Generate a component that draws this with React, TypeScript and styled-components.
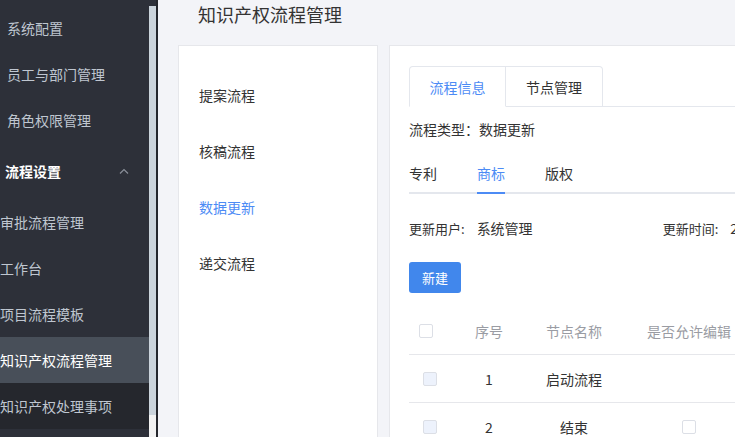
import React from "react";
import styled, { createGlobalStyle } from "styled-components";

const GlobalStyle = createGlobalStyle`
  html, body { margin: 0; padding: 0; overflow: hidden; }
  body {
    font-family: "Noto Sans CJK SC", "Noto Sans", "Liberation Sans", sans-serif;
    font-size: 14px;
    color: #333;
  }
  * { box-sizing: border-box; }
`;

const Layout = styled.div`
  display: flex;
  width: 735px;
  height: 437px;
  overflow: hidden;
`;

const Sidebar = styled.nav`
  width: 149px;
  flex-shrink: 0;
  background: #2d3039;
  display: flex;
  flex-direction: column;
  padding-top: 5px;
  overflow: hidden;
`;

const MenuItem = styled.div<{ $indent: number; $active?: boolean; $dark?: boolean }>`
  height: 46px;
  flex-shrink: 0;
  display: flex;
  align-items: center;
  padding-left: ${(p) => p.$indent}px;
  white-space: nowrap;
  font-size: 14px;
  color: ${(p) => (p.$active ? "#ffffff" : "#bfc6d0")};
  background: ${(p) => (p.$active ? "#484f59" : p.$dark ? "#25272d" : "transparent")};
`;

const GroupTitle = styled.div`
  height: 56px;
  flex-shrink: 0;
  display: flex;
  align-items: center;
  justify-content: space-between;
  padding: 0 20px 0 5px;
  color: #ffffff;
  font-size: 14px;
  font-weight: 600;
`;

const ScrollTrack = styled.div`
  width: 7px;
  flex-shrink: 0;
  display: flex;
  flex-direction: column;
  background: #f2f2f2;
`;

const TrackTop = styled.div`
  height: 6px;
  background: #2d3039;
`;

const Thumb = styled.div`
  height: 409px;
  background: #cbd4dc;
`;

const Divider = styled.div`
  width: 2px;
  flex-shrink: 0;
  background: #24262c;
`;

const Main = styled.main`
  flex: 1;
  min-width: 0;
  background: #f3f4f8;
  display: flex;
  flex-direction: column;
  padding-left: 20px;
  overflow: hidden;
`;

const PageTitle = styled.h1`
  margin: 0;
  height: 46px;
  padding: 0 0 16px 20px;
  line-height: 29px;
  font-size: 18px;
  font-weight: 400;
  color: #333;
`;

const Cards = styled.div`
  display: flex;
  gap: 11px;
  flex: 1;
  align-items: stretch;
`;

const Card = styled.section<{ $width: number }>`
  width: ${(p) => p.$width}px;
  flex-shrink: 0;
  background: #fff;
  border: 1px solid #e6e7eb;
  border-bottom: none;
`;

const FlowList = styled.div`
  display: flex;
  flex-direction: column;
  padding: 21px 0 0 20px;
`;

const FlowItem = styled.div<{ $active?: boolean }>`
  height: 56px;
  display: flex;
  align-items: center;
  font-size: 14px;
  color: ${(p) => (p.$active ? "#4c8bf5" : "#333")};
`;

const Detail = styled.div`
  padding: 20px 0 0 19px;
  display: flex;
  flex-direction: column;
`;

const CardTabs = styled.div`
  display: flex;
  height: 41px;
  border-bottom: 1px solid #e4e7ed;
`;

const CardTab = styled.div<{ $active?: boolean }>`
  width: 97px;
  height: 41px;
  display: flex;
  align-items: center;
  justify-content: center;
  border: 1px solid #e4e7ed;
  border-left: ${(p) => (p.$active ? "1px solid #e4e7ed" : "none")};
  border-bottom: 1px solid ${(p) => (p.$active ? "#fff" : "#e4e7ed")};
  border-radius: ${(p) => (p.$active ? "4px 0 0 0" : "0 4px 0 0")};
  color: ${(p) => (p.$active ? "#4c8bf5" : "#333")};
  font-size: 14px;
`;

const InfoLine = styled.div`
  height: 20px;
  line-height: 20px;
  margin-top: 12px;
  font-size: 14px;
  color: #333;
`;

const SubTabs = styled.div`
  display: flex;
  gap: 40px;
  margin-top: 14px;
  border-bottom: 2px solid #e4e7ed;
`;

const SubTab = styled.div<{ $active?: boolean }>`
  height: 41px;
  line-height: 40px;
  margin-bottom: -2px;
  font-size: 14px;
  color: ${(p) => (p.$active ? "#4c8bf5" : "#333")};
  border-bottom: 2px solid ${(p) => (p.$active ? "#4c8bf5" : "transparent")};
`;

const MetaRow = styled.div`
  display: flex;
  align-items: center;
  height: 20px;
  margin-top: 24px;
  font-size: 13px;
  color: #333;
  white-space: nowrap;
`;

const MetaLabel = styled.span<{ $gap: number }>`
  margin-right: ${(p) => p.$gap}px;
`;

const MetaValue = styled.span<{ $width: number }>`
  width: ${(p) => p.$width}px;
  font-size: 14px;
`;

const PrimaryButton = styled.button`
  margin-top: 24px;
  width: 52px;
  height: 31px;
  border: none;
  border-radius: 3px;
  background: #4187ec;
  color: #fff;
  font-family: inherit;
  font-size: 13px;
  padding: 0;
`;

const Table = styled.div`
  margin-top: 14px;
  display: flex;
  flex-direction: column;
  width: 360px;
`;

const Row = styled.div`
  display: grid;
  grid-template-columns: 42px 76px 94px 136px;
  height: 48px;
  align-items: center;
  border-bottom: 1px solid #e6e7eb;
`;

const Cell = styled.div<{ $head?: boolean }>`
  text-align: center;
  white-space: nowrap;
  font-size: 14px;
  color: ${(p) => (p.$head ? "#9a9ca3" : "#333")};
  display: flex;
  justify-content: center;
  align-items: center;
`;

const HeadCheckCell = styled.div`
  display: flex;
  padding-left: 10px;
`;

const CheckBox = styled.span<{ $disabled?: boolean }>`
  width: 14px;
  height: 14px;
  border: 1px solid #dcdfe6;
  border-radius: 2px;
  background: ${(p) => (p.$disabled ? "#edf2fc" : "#fff")};
  display: inline-block;
`;

const Chevron = () => (
  <svg width="10" height="6" viewBox="0 0 10 6" fill="none">
    <path d="M1 5.5 L5 1.5 L9 5.5" stroke="#8a8f99" strokeWidth="1.2" />
  </svg>
);

const rows = [
  { no: 1, name: "启动流程", editable: false },
  { no: 2, name: "结束", editable: true },
];

export default function App() {
  return (
    <>
      <GlobalStyle />
      <Layout>
        <Sidebar>
          <MenuItem $indent={7}>系统配置</MenuItem>
          <MenuItem $indent={7}>员工与部门管理</MenuItem>
          <MenuItem $indent={7}>角色权限管理</MenuItem>
          <GroupTitle>
            <span>流程设置</span>
            <Chevron />
          </GroupTitle>
          <MenuItem $indent={-3}>审批流程管理</MenuItem>
          <MenuItem $indent={-1}>工作台</MenuItem>
          <MenuItem $indent={-1}>项目流程模板</MenuItem>
          <MenuItem $indent={-1} $active>
            知识产权流程管理
          </MenuItem>
          <MenuItem $indent={-1} $dark>
            知识产权处理事项
          </MenuItem>
        </Sidebar>
        <ScrollTrack>
          <TrackTop />
          <Thumb />
        </ScrollTrack>
        <Divider />
        <Main>
          <PageTitle>知识产权流程管理</PageTitle>
          <Cards>
            <Card $width={200}>
              <FlowList>
                <FlowItem>提案流程</FlowItem>
                <FlowItem>核稿流程</FlowItem>
                <FlowItem $active>数据更新</FlowItem>
                <FlowItem>递交流程</FlowItem>
              </FlowList>
            </Card>
            <Card $width={520}>
              <Detail>
                <CardTabs>
                  <CardTab $active>流程信息</CardTab>
                  <CardTab>节点管理</CardTab>
                </CardTabs>
                <InfoLine>流程类型：数据更新</InfoLine>
                <SubTabs>
                  <SubTab>专利</SubTab>
                  <SubTab $active>商标</SubTab>
                  <SubTab>版权</SubTab>
                </SubTabs>
                <MetaRow>
                  <MetaLabel $gap={12}>更新用户:</MetaLabel>
                  <MetaValue $width={186}>系统管理</MetaValue>
                  <MetaLabel $gap={12}>更新时间:</MetaLabel>
                  <MetaValue $width={140}>2021-06-01</MetaValue>
                </MetaRow>
                <div>
                  <PrimaryButton>新建</PrimaryButton>
                </div>
                <Table>
                  <Row>
                    <HeadCheckCell>
                      <CheckBox />
                    </HeadCheckCell>
                    <Cell $head>序号</Cell>
                    <Cell $head>节点名称</Cell>
                    <Cell $head>是否允许编辑</Cell>
                  </Row>
                  {rows.map((r) => (
                    <Row key={r.no}>
                      <Cell>
                        <CheckBox $disabled />
                      </Cell>
                      <Cell>{r.no}</Cell>
                      <Cell>{r.name}</Cell>
                      <Cell>{r.editable ? <CheckBox /> : null}</Cell>
                    </Row>
                  ))}
                </Table>
              </Detail>
            </Card>
          </Cards>
        </Main>
      </Layout>
    </>
  );
}
